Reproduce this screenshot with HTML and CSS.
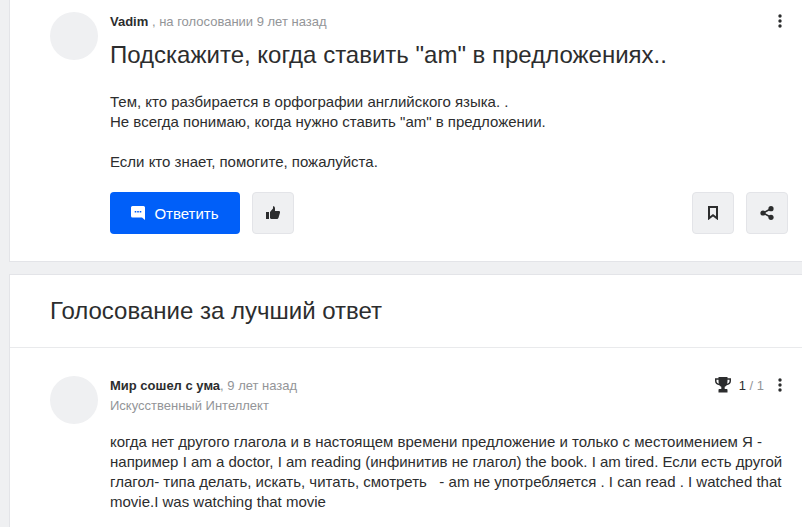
FILE: index.html
```html
<!DOCTYPE html>
<html lang="ru">
<head>
<meta charset="utf-8">
<title>Голосование</title>
<link rel="stylesheet" href="styles.css">
</head>
<body>
<main class="page">
  <section class="card question">
    <div class="post">
      <div class="avatar"></div>
      <div class="content">
        <div class="meta-row">
          <div class="meta"><b class="author">Vadim</b> , на голосовании 9 лет назад</div>
          <svg class="dots" viewBox="0 0 4 16"><circle cx="2" cy="3" r="1.7"/><circle cx="2" cy="8" r="1.7"/><circle cx="2" cy="13" r="1.7"/></svg>
        </div>
        <h1 class="title">Подскажите, когда ставить "am" в предложениях..</h1>
        <p class="text">Тем, кто разбирается в орфографии английского языка. .<br>Не всегда понимаю, когда нужно ставить "am" в предложении.<br><br>Если кто знает, помогите, пожалуйста.</p>
        <div class="actions">
          <button class="btn-primary">
            <svg class="chat" viewBox="0 0 14 14"><path fill-rule="evenodd" d="M1.500 0h11A1.500 1.500 0 0 1 14 1.500V14l-3-2.500H1.500A1.500 1.500 0 0 1 0 10V1.500A1.500 1.500 0 0 1 1.500 0zM3.700 5v1.600h1.600V5zM6.200 5v1.600h1.600V5zM8.700 5v1.600h1.600V5z"/></svg>
            Ответить
          </button>
          <button class="btn-icon"><svg viewBox="0 0 14 14"><path d="M0 6h3v7H0zM4 6l3-3.500V0.500C7 0 9 0 9 2.500V5h3.700c1.300 0 1.500 1 1.200 2l-1.400 4.800c-.3 1-1 1.200-1.700 1.200H6c-1 0-2-.5-2-1z"/></svg></button>
          <span class="spacer"></span>
          <button class="btn-icon"><svg viewBox="0 0 14 14"><path class="outline" d="M3 1h8v11.300L7 9.300l-4 3z"/></svg></button>
          <button class="btn-icon"><svg viewBox="0 0 14 14"><circle cx="11" cy="2.700" r="2.600"/><circle cx="3" cy="7" r="2.600"/><circle cx="11" cy="11.300" r="2.600"/><path class="link" d="M11 2.700L3 7l8 4.300"/></svg></button>
        </div>
      </div>
    </div>
  </section>
  <section class="card answers">
    <h2 class="heading">Голосование за лучший ответ</h2>
    <div class="post answer">
      <div class="avatar"></div>
      <div class="content">
        <div class="meta-row">
          <div class="meta"><b class="author">Мир сошел с ума</b>, 9 лет назад</div>
          <div class="votes">
            <svg class="trophy" viewBox="0 0 16 16"><path d="M3.500 0h9v1.300H16V4c0 2.500-2 4-4.300 4.300-.6.800-1.300 1.300-2 1.500V12h1.800c.6 0 1 .4 1 1v2.500H3.500V13c0-.6.400-1 1-1h1.800V9.800c-.7-.2-1.400-.7-2-1.500C2 8 0 6.500 0 4V1.300h3.500zM1.500 2.800V4c0 1.300 1 2.300 2.300 2.700-.2-1-.3-2.400-.3-3.900zM14.500 2.800h-2c0 1.500-.1 2.900-.3 3.900 1.300-.4 2.300-1.400 2.300-2.700z" fill-rule="evenodd"/></svg>
            <span class="count"><span class="count-now">1</span> / 1</span>
            <svg class="dots" viewBox="0 0 4 16"><circle cx="2" cy="3" r="1.700"/><circle cx="2" cy="8" r="1.700"/><circle cx="2" cy="13" r="1.700"/></svg>
          </div>
        </div>
        <div class="role">Искусственный Интеллект</div>
        <p class="text answer-text">когда нет другого глагола и в настоящем времени предложение и только с местоимением Я - например I am a doctor, I am reading (инфинитив не глагол) the book. I am tired. Если есть другой глагол- типа делать, искать, читать, смотреть &nbsp; - am не употребляется . I can read . I watched that movie.I was watching that movie</p>
      </div>
    </div>
  </section>
</main>
</body>
</html>
```
FILE: styles.css
```css
* { box-sizing: border-box; }
html, body { margin: 0; height: 527px; overflow: hidden; }
body {
  background: #eff0f2;
  font-family: "Liberation Sans", Arial, sans-serif;
  color: #2c2d2e;
}
.page {
  margin-left: 9px;
  margin-top: -1px;
  height: 528px;
  display: flex;
  flex-direction: column;
  gap: 12px;
}
.card {
  background: #fff;
  border: 1px solid #e3e4e8;
  border-right: 0;
}
.question { flex: none; height: 263px; border-top: 0; }
.answers { flex: 1; min-height: 0; border-bottom: 0; }
.post {
  display: flex;
  gap: 12px;
  padding: 13px 0 0 40px;
}
.avatar {
  flex: none;
  width: 48px;
  height: 48px;
  border-radius: 50%;
  background: #eff0f2;
}
.content { flex: 1; min-width: 0; padding-right: 14px; }
.meta-row {
  display: flex;
  justify-content: space-between;
  align-items: center;
  height: 18px;
}
.meta { font-size: 13px; color: #939598; }
.author { color: #2c2d2e; }
.dots { width: 4px; height: 16px; fill: #2c2d2e; flex: none; margin-right: 6px; }
.title {
  margin: 9px 0 0;
  font-size: 24px;
  line-height: 32px;
  font-weight: 400;
  color: #2c2d2e;
}
.text {
  margin: 21px 0 0;
  font-size: 15px;
  line-height: 20px;
}
.actions {
  display: flex;
  gap: 12px;
  margin-top: 20px;
}
.spacer { flex: 1; }
button {
  font-family: inherit;
  border: 0;
  padding: 0;
  display: flex;
  align-items: center;
  justify-content: center;
}
.btn-primary {
  width: 130px;
  height: 42px;
  border-radius: 4px;
  background: #005ff9;
  color: #fff;
  font-size: 15px;
  gap: 9px;
}
.chat { width: 14px; height: 14px; fill: #fff; }
.btn-icon {
  width: 42px;
  height: 42px;
  border-radius: 4px;
  background: #eff0f2;
  border: 1px solid #e3e4e8;
}
.btn-icon svg { width: 14px; height: 14px; fill: #2c2d2e; }
.btn-icon .outline { fill: none; stroke: #2c2d2e; stroke-width: 2; }
.btn-icon .link { fill: none; stroke: #2c2d2e; stroke-width: 1.6; }
.heading {
  margin: 0;
  height: 73px;
  padding: 0 0 0 40px;
  display: flex;
  align-items: center;
  font-size: 24px;
  font-weight: 400;
  border-bottom: 1px solid #e9eaec;
}
.answer { padding-top: 28px; }
.votes { display: flex; align-items: center; }
.trophy { width: 16px; height: 16px; fill: #2c2d2e; margin-right: 8px; }
.count { font-size: 13px; color: #939598; margin-right: 14px; }
.count-now { color: #2c2d2e; }
.role { margin-top: 3px; font-size: 13px; line-height: 18px; color: #939598; }
.answer-text { margin-top: 17px; }
```
